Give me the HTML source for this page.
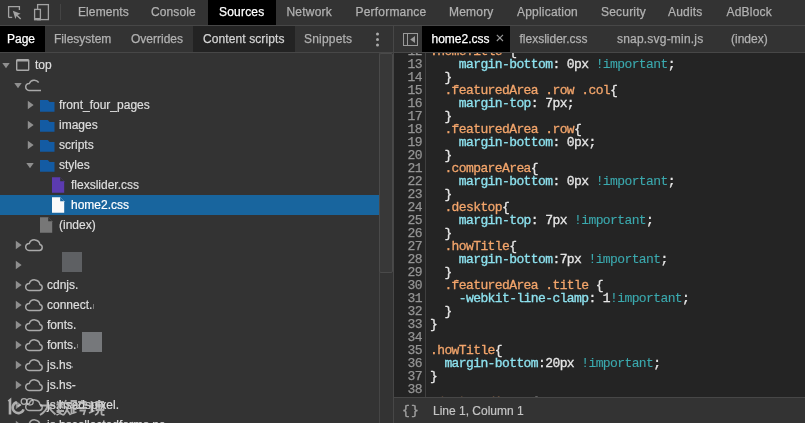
<!DOCTYPE html>
<html><head><meta charset="utf-8">
<style>
*{box-sizing:border-box;margin:0;padding:0}
html,body{width:805px;height:423px;overflow:hidden;background:#333}
body{position:relative;will-change:transform;font-family:"Liberation Sans",sans-serif;font-size:12px;color:#bdbdbd;-webkit-text-stroke:0.2px currentColor}
.a{position:absolute;white-space:pre}
.tb{position:absolute;left:0;top:0;width:805px;height:25px;background:#333}
.hl{position:absolute;height:1px;background:#474747}
.vl{position:absolute;width:1px;background:#474747}
.t{position:absolute;top:4px;line-height:16px;color:#b1b1b1;letter-spacing:0.2px;-webkit-text-stroke:0.25px currentColor}
.sel{color:#fff}
.row{position:absolute;left:0;width:379px;height:20px;line-height:20px}
.code{position:absolute;left:394px;top:53px;width:411px;height:344px;background:#242424;overflow:hidden}
.ln{position:absolute;-webkit-text-stroke:0.25px currentColor;left:0;width:28px;text-align:right;font-family:"Liberation Mono",monospace;font-size:13px;letter-spacing:-0.6px;color:#949494;line-height:13px}
.cl{position:absolute;left:36px;-webkit-text-stroke:0.3px currentColor;font-family:"Liberation Mono",monospace;font-size:13px;letter-spacing:-0.6px;line-height:13px;color:#e6e6e6;white-space:pre}
.s{color:#f3a56b}
.p{color:#8de1ee}
.i{color:#3ba9ae;-webkit-text-stroke:0.1px currentColor}
</style></head><body>
<!-- top toolbar -->
<div class="tb"></div>
<svg class="a" style="left:0;top:0" width="62" height="25" viewBox="0 0 62 25">
  <path d="M8.6 17.4V6.6H19.4V10" fill="none" stroke="#a3a3a3" stroke-width="1.3"/>
  <path d="M8.6 17.4H12.2" fill="none" stroke="#a3a3a3" stroke-width="1.3"/>
  <path d="M12.8 10.8L20.6 13.8L17.6 15L21.2 18.6L20.2 19.6L16.6 16L15.4 19Z" fill="#a3a3a3"/>
  <rect x="37.6" y="4.6" width="10.8" height="15" fill="none" stroke="#a3a3a3" stroke-width="1.3"/>
  <rect x="34.6" y="9.4" width="5.8" height="10.2" fill="#333" stroke="#a3a3a3" stroke-width="1.3"/><rect x="34" y="18" width="7" height="2.2" fill="#a3a3a3"/>
  <rect x="60" y="4" width="1" height="16" fill="#444"/>
</svg>
<div class="a" style="left:208px;top:0;width:68px;height:25px;background:#000"></div>
<div class="t" style="left:78px;letter-spacing:0.1px">Elements</div>
<div class="t" style="left:151px;letter-spacing:0.1px">Console</div>
<div class="t sel" style="left:219px">Sources</div>
<div class="t" style="left:286.5px">Network</div>
<div class="t" style="left:355.5px">Performance</div>
<div class="t" style="left:449px">Memory</div>
<div class="t" style="left:517px">Application</div>
<div class="t" style="left:601px">Security</div>
<div class="t" style="left:668px">Audits</div>
<div class="t" style="left:726.5px">AdBlock</div>
<div class="hl" style="left:0;top:25px;width:805px"></div>

<!-- navigator tabs -->
<div class="a" style="left:0;top:26px;width:45px;height:26px;background:#000"></div>
<div class="a" style="left:193px;top:26px;width:102px;height:26px;background:#232323"></div>
<div class="t sel" style="left:7px;top:31px;letter-spacing:0">Page</div>
<div class="t" style="left:54px;top:31px;letter-spacing:0">Filesystem</div>
<div class="t" style="left:131px;top:31px;letter-spacing:0">Overrides</div>
<div class="t" style="left:203px;top:31px;color:#d3d3d3;letter-spacing:0.1px">Content scripts</div>
<div class="t" style="left:304px;top:31px">Snippets</div>
<svg class="a" style="left:372px;top:30px" width="12" height="20"><circle cx="5.5" cy="4" r="1.5" fill="#aaa"/><circle cx="5.5" cy="9.5" r="1.5" fill="#aaa"/><circle cx="5.5" cy="15" r="1.5" fill="#aaa"/></svg>
<div class="hl" style="left:0;top:52px;width:805px"></div>
<div class="vl" style="left:393px;top:26px;height:397px"></div>

<!-- editor tabs -->
<svg class="a" style="left:400px;top:30px" width="20" height="20"><rect x="3.5" y="3.5" width="14" height="12" fill="none" stroke="#9a9a9a"/><path d="M7.5 3.5V15.5" stroke="#9a9a9a"/><path d="M15 6V13L10.2 9.5Z" fill="#9a9a9a"/></svg>
<div class="a" style="left:422px;top:26px;width:88px;height:26px;background:#000"></div>
<div class="t sel" style="left:431.5px;top:31px;letter-spacing:0">home2.css</div>
<svg class="a" style="left:496px;top:34px" width="8" height="8"><path d="M0.8 0.8L7 7M7 0.8L0.8 7" stroke="#9a9a9a" stroke-width="1.1"/></svg>
<div class="t" style="left:519.5px;top:31px;letter-spacing:0">flexslider.css</div>
<div class="t" style="left:617px;top:31px">snap.svg-min.js</div>
<div class="t" style="left:731px;top:31px;letter-spacing:0">(index)</div>

<!-- navigator tree -->
<div class="a" style="left:379px;top:53px;width:14px;height:370px;border-left:1px solid #454545"></div>
<div class="a" style="left:379px;top:53px;width:14px;height:220px;border:1px solid #4a4a4a;background:#383838;border-radius:2px"></div>

<div class="row" style="top:195px;background:#18659e"></div>

<div id="tree">
<svg class="a" style="left:2.2px;top:62px" width="9" height="8"><path d="M0.3 0.9H7.7L4 6.3Z" fill="#8f8f8f"/></svg>
<svg class="a" style="left:16px;top:59px" width="14" height="12"><rect x="0.7" y="0.7" width="12" height="10.6" rx="0.8" fill="none" stroke="#a9a9a9" stroke-width="1.4"/><rect x="0.7" y="0.7" width="12" height="1.8" fill="#a9a9a9"/></svg>
<div class="a" style="left:35px;top:55px;line-height:20px;color:#dedede;">top</div>
<svg class="a" style="left:14.2px;top:82px" width="9" height="8"><path d="M0.3 0.9H7.7L4 6.3Z" fill="#8f8f8f"/></svg>
<svg class="a" style="left:24px;top:79px" width="20" height="14"><path d="M17 11.4H5A3.45 3.45 0 0 1 5.3 4.5A5.5 5.5 0 0 1 14.7 3.5" fill="none" stroke="#a9a9a9" stroke-width="1.5"/></svg>
<svg class="a" style="left:27px;top:100px" width="8" height="10"><path d="M0.8 0.8L6.6 5L0.8 9.2Z" fill="#8f8f8f"/></svg>
<svg class="a" style="left:40px;top:99px" width="15" height="13"><path d="M0 1H7.8L9.6 2.9H14.5V12.8H0Z" fill="#135ba3"/></svg>
<div class="a" style="left:59px;top:95px;line-height:20px;color:#dedede;">front_four_pages</div>
<svg class="a" style="left:27px;top:120px" width="8" height="10"><path d="M0.8 0.8L6.6 5L0.8 9.2Z" fill="#8f8f8f"/></svg>
<svg class="a" style="left:40px;top:119px" width="15" height="13"><path d="M0 1H7.8L9.6 2.9H14.5V12.8H0Z" fill="#135ba3"/></svg>
<div class="a" style="left:59px;top:115px;line-height:20px;color:#dedede;">images</div>
<svg class="a" style="left:27px;top:140px" width="8" height="10"><path d="M0.8 0.8L6.6 5L0.8 9.2Z" fill="#8f8f8f"/></svg>
<svg class="a" style="left:40px;top:139px" width="15" height="13"><path d="M0 1H7.8L9.6 2.9H14.5V12.8H0Z" fill="#135ba3"/></svg>
<div class="a" style="left:59px;top:135px;line-height:20px;color:#dedede;">scripts</div>
<svg class="a" style="left:26.2px;top:162px" width="9" height="8"><path d="M0.3 0.9H7.7L4 6.3Z" fill="#8f8f8f"/></svg>
<svg class="a" style="left:40px;top:159px" width="15" height="13"><path d="M0 1H7.8L9.6 2.9H14.5V12.8H0Z" fill="#135ba3"/></svg>
<div class="a" style="left:59px;top:155px;line-height:20px;color:#dedede;">styles</div>
<svg class="a" style="left:52px;top:177px" width="13" height="16"><path d="M0 0.2H8.2L12.2 4.2V15.8H0Z" fill="#5b3bb0"/><path d="M8.2 0.2V4.2H12.2" fill="#333"/></svg>
<div class="a" style="left:71px;top:175px;line-height:20px;color:#dedede;">flexslider.css</div>
<svg class="a" style="left:52px;top:197px" width="13" height="16"><path d="M0 0.2H8.2L12.2 4.2V15.8H0Z" fill="#fafafa"/><path d="M8.2 0.2V4.2H12.2" fill="#18659e"/></svg>
<div class="a" style="left:71px;top:195px;line-height:20px;color:#dedede;color:#fff;">home2.css</div>
<svg class="a" style="left:40px;top:217px" width="13" height="16"><path d="M0 0.2H8.2L12.2 4.2V15.8H0Z" fill="#777"/><path d="M8.2 0.2V4.2H12.2" fill="#333"/></svg>
<div class="a" style="left:59px;top:215px;line-height:20px;color:#dedede;">(index)</div>
<svg class="a" style="left:15px;top:240px" width="8" height="10"><path d="M0.8 0.8L6.6 5L0.8 9.2Z" fill="#8f8f8f"/></svg>
<svg class="a" style="left:24px;top:239px" width="20" height="14"><path d="M5 11.4H15.5A3 3 0 0 0 15.9 5.5A5.5 5.5 0 0 0 5.3 4.5A3.45 3.45 0 0 0 5 11.4Z" fill="none" stroke="#a9a9a9" stroke-width="1.5"/></svg>
<svg class="a" style="left:15px;top:260px" width="8" height="10"><path d="M0.8 0.8L6.6 5L0.8 9.2Z" fill="#8f8f8f"/></svg>
<svg class="a" style="left:15px;top:280px" width="8" height="10"><path d="M0.8 0.8L6.6 5L0.8 9.2Z" fill="#8f8f8f"/></svg>
<svg class="a" style="left:24px;top:279px" width="20" height="14"><path d="M5 11.4H15.5A3 3 0 0 0 15.9 5.5A5.5 5.5 0 0 0 5.3 4.5A3.45 3.45 0 0 0 5 11.4Z" fill="none" stroke="#a9a9a9" stroke-width="1.5"/></svg>
<div class="a" style="left:47px;top:275px;line-height:20px;color:#dedede;">cdnjs.</div>
<svg class="a" style="left:15px;top:300px" width="8" height="10"><path d="M0.8 0.8L6.6 5L0.8 9.2Z" fill="#8f8f8f"/></svg>
<svg class="a" style="left:24px;top:299px" width="20" height="14"><path d="M5 11.4H15.5A3 3 0 0 0 15.9 5.5A5.5 5.5 0 0 0 5.3 4.5A3.45 3.45 0 0 0 5 11.4Z" fill="none" stroke="#a9a9a9" stroke-width="1.5"/></svg>
<div class="a" style="left:47px;top:295px;line-height:20px;color:#dedede;">connect.</div>
<svg class="a" style="left:15px;top:320px" width="8" height="10"><path d="M0.8 0.8L6.6 5L0.8 9.2Z" fill="#8f8f8f"/></svg>
<svg class="a" style="left:24px;top:319px" width="20" height="14"><path d="M5 11.4H15.5A3 3 0 0 0 15.9 5.5A5.5 5.5 0 0 0 5.3 4.5A3.45 3.45 0 0 0 5 11.4Z" fill="none" stroke="#a9a9a9" stroke-width="1.5"/></svg>
<div class="a" style="left:47px;top:315px;line-height:20px;color:#dedede;">fonts.</div>
<svg class="a" style="left:15px;top:340px" width="8" height="10"><path d="M0.8 0.8L6.6 5L0.8 9.2Z" fill="#8f8f8f"/></svg>
<svg class="a" style="left:24px;top:339px" width="20" height="14"><path d="M5 11.4H15.5A3 3 0 0 0 15.9 5.5A5.5 5.5 0 0 0 5.3 4.5A3.45 3.45 0 0 0 5 11.4Z" fill="none" stroke="#a9a9a9" stroke-width="1.5"/></svg>
<div class="a" style="left:47px;top:335px;line-height:20px;color:#dedede;">fonts.</div>
<svg class="a" style="left:15px;top:360px" width="8" height="10"><path d="M0.8 0.8L6.6 5L0.8 9.2Z" fill="#8f8f8f"/></svg>
<svg class="a" style="left:24px;top:359px" width="20" height="14"><path d="M5 11.4H15.5A3 3 0 0 0 15.9 5.5A5.5 5.5 0 0 0 5.3 4.5A3.45 3.45 0 0 0 5 11.4Z" fill="none" stroke="#a9a9a9" stroke-width="1.5"/></svg>
<div class="a" style="left:47px;top:355px;line-height:20px;color:#dedede;">js.hs</div>
<svg class="a" style="left:15px;top:380px" width="8" height="10"><path d="M0.8 0.8L6.6 5L0.8 9.2Z" fill="#8f8f8f"/></svg>
<svg class="a" style="left:24px;top:379px" width="20" height="14"><path d="M5 11.4H15.5A3 3 0 0 0 15.9 5.5A5.5 5.5 0 0 0 5.3 4.5A3.45 3.45 0 0 0 5 11.4Z" fill="none" stroke="#a9a9a9" stroke-width="1.5"/></svg>
<div class="a" style="left:47px;top:375px;line-height:20px;color:#dedede;">js.hs-</div>
<svg class="a" style="left:15px;top:400px" width="8" height="10"><path d="M0.8 0.8L6.6 5L0.8 9.2Z" fill="#8f8f8f"/></svg>
<svg class="a" style="left:24px;top:399px" width="20" height="14"><path d="M5 11.4H15.5A3 3 0 0 0 15.9 5.5A5.5 5.5 0 0 0 5.3 4.5A3.45 3.45 0 0 0 5 11.4Z" fill="none" stroke="#a9a9a9" stroke-width="1.5"/></svg>
<div class="a" style="left:47px;top:395px;line-height:20px;color:#dedede;">js.hsadspixel.</div>
<svg class="a" style="left:15px;top:420px" width="8" height="10"><path d="M0.8 0.8L6.6 5L0.8 9.2Z" fill="#8f8f8f"/></svg>
<svg class="a" style="left:24px;top:419px" width="20" height="14"><path d="M5 11.4H15.5A3 3 0 0 0 15.9 5.5A5.5 5.5 0 0 0 5.3 4.5A3.45 3.45 0 0 0 5 11.4Z" fill="none" stroke="#a9a9a9" stroke-width="1.5"/></svg>
<div class="a" style="left:47px;top:415px;line-height:20px;color:#dedede;">js.hscollectedforms.ne</div>
<div class="a" style="left:62px;top:252px;width:20px;height:20px;background:#5e6063"></div>
<div class="a" style="left:82px;top:332px;width:20px;height:20px;background:#76787b"></div>
<div class="a" style="left:93px;top:304px;width:1px;height:5px;background:rgba(200,200,200,0.45)"></div>
<div class="a" style="left:77px;top:344px;width:1px;height:4px;background:rgba(200,200,200,0.45)"></div>
<div class="a" style="left:72px;top:366px;width:1px;height:2px;background:rgba(200,200,200,0.45)"></div>
</div><!--/tree-->

<!--wm--><svg class="a" style="left:0;top:390px" width="120" height="33" viewBox="0 390 120 33">
<g fill="none" stroke="rgba(205,205,205,0.8)" stroke-width="1.8" stroke-linecap="butt">
<path d="M8.5 401.5L10 400.3V414.5" stroke-width="2.6"/>
<path d="M16.6 402.2A5.6 5.6 0 1 0 23.6 409.4" stroke-width="2.6"/>
<path d="M17.5 406.5L20.5 404.5"/>
<circle cx="24" cy="401.5" r="2.8" stroke-width="1.3"/>
<circle cx="30" cy="401.8" r="3.2" stroke-width="1.3"/>
<path d="M40 405.5H55M47.5 400V405.5Q46.5 411 40 415M48 406Q51 411 55.5 414.5"/>
<path d="M57 401.5L58.8 403.3M63 401.5L61.2 403.3M56.5 404.5H63.5M60 400V408M60 405L57 408M60 405L63 408M56.5 411H64M59 408.5L57.5 412Q61 414 63.5 415M62 410Q60 413.5 56.5 415M66 400L64.5 404M65 403H70.5M69 403.5Q68 410 63.5 415M65.5 406Q67 411 70.5 415"/>
<path d="M71.5 401H76V405H71.5ZM73.7 405V413.5M73.7 409H76.5M71.5 407V413.5L76.5 412M78 402H86.5M82 400V402M82 402L78.5 406M82 402L86.5 406M78 408H87M79.5 410.5H85L83.5 415"/>
<path d="M89 405.5H94M91.5 401V412M89 413L94.5 410.5M99.5 400V401.5M95.5 402H104M97 402.5L98 404.5M102.5 402.5L101.5 404.5M95 405H105M96.5 406.5H103.5V410H96.5ZM98.5 410Q98.5 413.5 95 415M101.5 410V414Q101.5 415 104.5 415"/>
</g></svg><!--/wm-->
<!-- code -->
<div class="code">
  <div class="a" style="left:31px;top:0;width:1px;height:344px;background:#3f3f3f"></div>
<div class="ln" style="top:-8px">12</div>
<div class="cl" style="top:-8px"><span class="s">.homeTitle </span>{</div>
<div class="ln" style="top:5px">13</div>
<div class="cl" style="top:5px">    <span class="p">margin-bottom</span>: 0px <span class="i">!important</span>;</div>
<div class="ln" style="top:18px">14</div>
<div class="cl" style="top:18px">  }</div>
<div class="ln" style="top:31px">15</div>
<div class="cl" style="top:31px">  <span class="s">.featuredArea .row .col</span>{</div>
<div class="ln" style="top:44px">16</div>
<div class="cl" style="top:44px">    <span class="p">margin-top</span>: 7px;</div>
<div class="ln" style="top:57px">17</div>
<div class="cl" style="top:57px">  }</div>
<div class="ln" style="top:70px">18</div>
<div class="cl" style="top:70px">  <span class="s">.featuredArea .row</span>{</div>
<div class="ln" style="top:83px">19</div>
<div class="cl" style="top:83px">    <span class="p">margin-bottom</span>: 0px;</div>
<div class="ln" style="top:96px">20</div>
<div class="cl" style="top:96px">  }</div>
<div class="ln" style="top:109px">21</div>
<div class="cl" style="top:109px">  <span class="s">.compareArea</span>{</div>
<div class="ln" style="top:122px">22</div>
<div class="cl" style="top:122px">    <span class="p">margin-bottom</span>: 0px <span class="i">!important</span>;</div>
<div class="ln" style="top:135px">23</div>
<div class="cl" style="top:135px">  }</div>
<div class="ln" style="top:148px">24</div>
<div class="cl" style="top:148px">  <span class="s">.desktop</span>{</div>
<div class="ln" style="top:161px">25</div>
<div class="cl" style="top:161px">    <span class="p">margin-top</span>: 7px <span class="i">!important</span>;</div>
<div class="ln" style="top:174px">26</div>
<div class="cl" style="top:174px">  }</div>
<div class="ln" style="top:187px">27</div>
<div class="cl" style="top:187px">  <span class="s">.howTitle</span>{</div>
<div class="ln" style="top:200px">28</div>
<div class="cl" style="top:200px">    <span class="p">margin-bottom</span>:7px <span class="i">!important</span>;</div>
<div class="ln" style="top:213px">29</div>
<div class="cl" style="top:213px">  }</div>
<div class="ln" style="top:226px">30</div>
<div class="cl" style="top:226px">  <span class="s">.featuredArea .title</span> {</div>
<div class="ln" style="top:239px">31</div>
<div class="cl" style="top:239px">    <span class="p">-webkit-line-clamp</span>: 1<span class="i">!important</span>;</div>
<div class="ln" style="top:252px">32</div>
<div class="cl" style="top:252px">  }</div>
<div class="ln" style="top:265px">33</div>
<div class="cl" style="top:265px">}</div>
<div class="ln" style="top:278px">34</div>
<div class="cl" style="top:278px"></div>
<div class="ln" style="top:291px">35</div>
<div class="cl" style="top:291px"><span class="s">.howTitle</span>{</div>
<div class="ln" style="top:304px">36</div>
<div class="cl" style="top:304px">  <span class="p">margin-bottom</span>:20px <span class="i">!important</span>;</div>
<div class="ln" style="top:317px">37</div>
<div class="cl" style="top:317px">}</div>
<div class="ln" style="top:330px">38</div>
<div class="cl" style="top:330px"></div>
<div class="ln" style="top:343px">39</div>
<div class="cl" style="top:343px"><span class="s">.featuredArea</span> {</div>
</div><!--/code-->

<!-- status bar -->
<div class="a" style="left:394px;top:397px;width:411px;height:26px;background:#333;border-top:1px solid #474747"></div>
<div class="a" style="left:402px;top:404px;font-family:'Liberation Mono',monospace;font-size:13px;line-height:14px;color:#9d9d9d;letter-spacing:1.3px;-webkit-text-stroke:0.4px currentColor">{}</div>
<div class="a" style="left:433px;top:403px;line-height:16px;color:#c4c4c4">Line 1, Column 1</div>
</body></html>
